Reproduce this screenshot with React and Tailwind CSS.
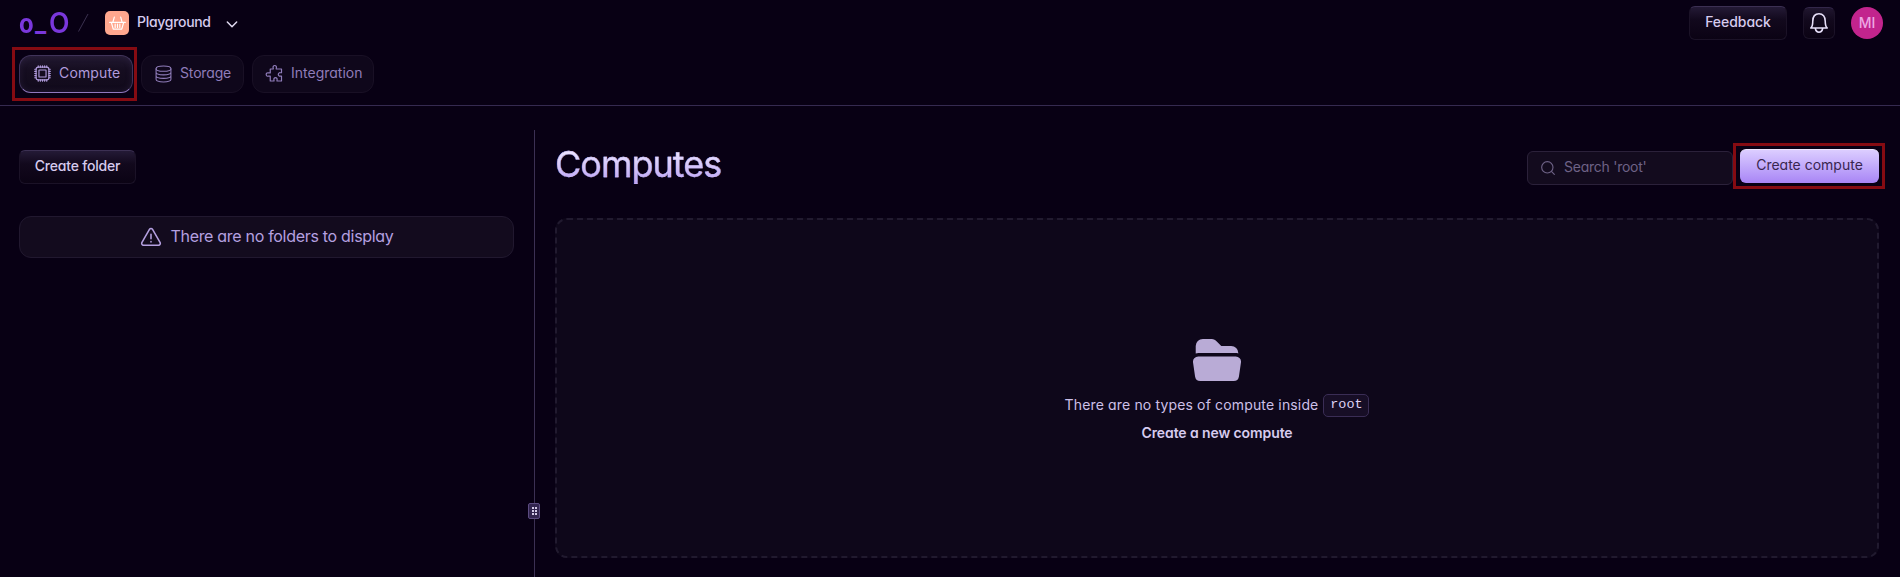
const FONT = "font-['Inter','Liberation_Sans',sans-serif] [font-feature-settings:'cv11'_1]";

const Line = ({ className = "", width = 1.5, children }) => (
  <svg viewBox="0 0 24 24" fill="none" stroke="currentColor" strokeWidth={width} strokeLinecap="round" strokeLinejoin="round" className={"shrink-0 " + className}>
    {children}
  </svg>
);

const Chip = () => (
  <Line className="h-[17px] w-[17px]" width={1.6}>
    <rect x="3" y="3" width="18" height="18" rx="3" />
    <rect x="7" y="7" width="10" height="10" rx="0.5" />
    <path d="M6 1v2M9 1v2M12 1v2M15 1v2M18 1v2M6 21v2M9 21v2M12 21v2M15 21v2M18 21v2M1 6h2M1 9h2M1 12h2M1 15h2M1 18h2M21 6h2M21 9h2M21 12h2M21 15h2M21 18h2" />
  </Line>
);

const Database = () => (
  <Line className="h-[18px] w-[17px]" width={1.5}>
    <ellipse cx="12" cy="4.500" rx="10.500" ry="3.700" />
    <path d="M1.500 4.500v15c0 2 4.700 3.700 10.500 3.700s10.500-1.700 10.500-3.700v-15M1.500 9.500c0 2 4.700 3.700 10.500 3.700s10.500-1.700 10.500-3.700M1.500 14.500c0 2 4.700 3.700 10.500 3.700s10.500-1.700 10.500-3.700" />
  </Line>
);

const Puzzle = () => (
  <Line className="h-[19px] w-[18px]" width={1.6}>
    <path d="M7 6h4V4.800a2.300 2.300 0 1 1 4 0V6h7v5h-1.500a2.300 2.300 0 1 0 0 4.500H22V22h-6v-1.300a2.200 2.200 0 1 0-4 0V22H7v-6.500H4.700a2.300 2.300 0 1 1 0-4.300H7z" />
  </Line>
);

const Basket = () => (
  <Line className="h-[17px] w-[17px] text-white" width={1.7}>
    <path d="M5.500 10 7.500 3M18.500 10 16.500 3M1 10.500h22M3.500 11l2.500 9h12l2.500-9M8.700 13v4.500M12 13v4.500M15.300 13v4.500" />
  </Line>
);

const Tab = ({ icon, label, className, labelClass }) => (
  <div className={"flex h-[38px] items-center rounded-xl border pb-px text-[14px] " + className}>
    {icon}
    <span className={"ml-2 whitespace-nowrap pb-px leading-none " + labelClass}>{label}</span>
  </div>
);

const DARK_BUTTON =
  "flex h-[34px] items-center justify-center whitespace-nowrap rounded-md border border-[#1b1227] border-t-[#3c3053] bg-linear-to-b from-[#241a36] via-[#12091d] via-40% to-[#0b0314] text-[14px] font-medium text-[#d6cbee]";

export default function App() {
  return (
    <div className={"flex h-[577px] w-[1900px] flex-col overflow-hidden bg-[#080014] " + FONT}>
      <header className="h-[106px] shrink-0 border-b border-[#352a50]">
        <div className="flex h-[46px] items-center pl-[18px] pr-[17px]">
          <span className="flex w-[51px] items-baseline whitespace-nowrap pl-px pt-px text-[26px] font-bold leading-[36px] text-[#7a37dc]">
            <span className="w-[16px] origin-left scale-x-[0.92]">o</span>
            <span className="w-[14px] origin-left scale-x-[0.9] -translate-y-[2px]">_</span>
            <span className="w-[19px] origin-left scale-x-[0.95] text-[28px] font-semibold tracking-[-1px]">O</span>
          </span>
          <svg viewBox="0 0 12 20" className="ml-[8px] h-5 w-3" fill="none" stroke="#3b3150">
            <path d="M1.500 18.500 11 1" />
          </svg>
          <div className="ml-[16px] flex h-6 w-6 items-center justify-center rounded-[5px] bg-[#ffa78e]">
            <Basket />
          </div>
          <span className="ml-[8px] w-[74px] whitespace-nowrap pb-[2px] text-[14px] font-medium leading-none tracking-[-0.3px] text-[#d6cbee]">Playground</span>
          <Line className="ml-[13px] mt-[2px] h-4 w-4 text-[#e2dbf2]" width={2.2}>
            <path d="m5 9 7 7 7-7" />
          </Line>
          <div className="ml-auto flex items-center">
            <div className={DARK_BUTTON + " w-[98px] pb-[3px] tracking-[-0.05px]"}>Feedback</div>
            <div className="ml-4 flex h-8 w-8 items-center justify-center rounded-md border border-[#1b1227] border-t-[#33274a] bg-linear-to-b from-[#20162f] via-[#12091d] via-40% to-[#0b0314]">
              <Line className="h-[22px] w-[22px] text-[#e6def8]" width={1.7}>
                <path d="M3 17.500h18c-1.700-1.500-2.200-3-2.200-7.500 0-5-2.500-8-6.800-8s-6.800 3-6.800 8c0 4.500-.5 6-2.200 7.500zM8 18c.5 2.600 2 4 4 4s3.500-1.400 4-4" />
              </Line>
            </div>
            <div className="ml-4 flex h-8 w-8 items-center justify-center rounded-full bg-[#c2248d] pb-px text-[14px] font-medium text-[#eda8e4]">MI</div>
          </div>
        </div>
        <div className="flex h-[56px] gap-2 pl-[19px] pt-[9px]">
          <div className="relative">
            <Tab
              icon={<Chip />}
              label="Compute"
              labelClass="tracking-[0.15px]"
              className="w-[114px] border-[#40345a] border-b-[#9078be] bg-linear-to-b from-[#221931] via-[#150d20] via-40% to-[#110a1b] pl-[14px] text-[#b09bdc] shadow-[inset_0_0_6px_#3a2e5266]"
            />
            <div className="pointer-events-none absolute -left-[7px] -top-[8px] h-[54px] w-[125px] border-[3px] border-[#850b12]" />
          </div>
          <Tab icon={<Database />} label="Storage" labelClass="-ml-[1px] tracking-[-0.15px]" className="w-[103px] border-[#191025] bg-[#0f071b] pl-[13px] text-[#8f7cb9]" />
          <Tab icon={<Puzzle />} label="Integration" labelClass="tracking-[0px]" className="w-[122px] border-[#191025] bg-[#0f071b] pl-[12px] text-[#8f7cb9]" />
        </div>
      </header>

      <main className="flex min-h-0 flex-1 pt-6">
        <aside className="w-[534px] shrink-0 pl-[19px] pr-5 pt-5">
          <div className={DARK_BUTTON + " w-[117px] pb-[3px] tracking-[-0.2px]"}>Create folder</div>
          <div className="mt-8 flex h-[42px] items-center justify-center rounded-xl border border-[#21182f] bg-[#130b1e] pb-px pl-px text-[#b5a0e0]">
            <Line className="h-[22px] w-[22px]" width={1.7}>
              <path d="M10.300 3.700 2 18.200A2 2 0 0 0 3.700 21h16.600a2 2 0 0 0 1.700-2.800L13.700 3.700a2 2 0 0 0-3.400 0zM12 9v5M12 17v.5" />
            </Line>
            <span className="ml-[8px] whitespace-nowrap pb-px text-[16px] tracking-[-0.3px]">There are no folders to display</span>
          </div>
        </aside>

        <div className="relative w-px shrink-0 bg-[#3b3053]">
          <div className="absolute -left-[6px] top-[373px] grid h-4 w-3 grid-cols-[2px_2px] content-center justify-center gap-[1px] rounded-[2px] border border-[#5b4b80] bg-[#32254f]">
            {Array.from({ length: 6 }, (_, i) => (
              <span key={i} className="h-[2px] w-[2px] bg-[#d4cbe8]" />
            ))}
          </div>
        </div>

        <section className="flex min-w-0 flex-1 flex-col pl-5 pr-[21px]">
          <div className="flex h-[88px] shrink-0">
            <h1 className="mt-[10px] h-[50px] bg-linear-to-b from-[#eee7ff] from-20% to-[#b99df5] to-90% bg-clip-text pr-2 text-[36px] leading-[48px] tracking-[-1px] text-transparent [-webkit-text-stroke:0.3px_#d3c3fa]">Computes</h1>
            <div className="ml-auto mt-[21px] flex h-[34px] w-[206px] items-center rounded-md border border-[#2b213a] bg-[#130b1e] pl-[12px] text-[#6e6286]">
              <Line className="h-[16px] w-[16px]" width={1.7}>
                <circle cx="11" cy="11" r="8.500" />
                <path d="m17.500 17.500 4 4" />
              </Line>
              <span className="ml-[8px] whitespace-nowrap pb-[3px] text-[14px] tracking-[-0.25px]">Search 'root'</span>
            </div>
            <div className="relative ml-[7px] mt-[19px] h-[34px] w-[139px]">
              <div className="flex h-[34px] items-center justify-center whitespace-nowrap rounded-md border-t border-[#f0e9ff] bg-linear-to-b from-[#dccdff] to-[#a985f5] pb-[4px] text-[14px] text-[#39264f]">Create compute</div>
              <div className="pointer-events-none absolute -left-[7px] -top-[6px] h-[46px] w-[152px] border-[3px] border-[#850b12]" />
            </div>
          </div>

          <div className="relative flex h-[340px] shrink-0 flex-col items-center rounded-xl bg-[#0e071a] pt-[119px] text-[14px] text-[#cdc0e8]">
            <svg className="absolute inset-0 h-full w-full" fill="none">
              <rect x="1" y="1" width="1322" height="338" rx="11" stroke="#211a2f" strokeWidth="2" strokeDasharray="6 4" />
            </svg>
            <svg viewBox="1.850 3 20.300 18" preserveAspectRatio="none" className="mt-[2px] h-[42px] w-[48px] fill-[#b9abd6]">
              <path d="M19.906 9c.382 0 .749.057 1.094.162V9a3 3 0 0 0-3-3h-3.879a.75.75 0 0 1-.53-.22L11.470 3.660A2.250 2.250 0 0 0 9.879 3H6a3 3 0 0 0-3 3v3.162A3.756 3.756 0 0 1 4.094 9h15.812zM4.094 10.500a2.250 2.250 0 0 0-2.227 2.568l.857 6A2.250 2.250 0 0 0 4.951 21H19.050a2.250 2.250 0 0 0 2.227-1.932l.857-6a2.250 2.250 0 0 0-2.227-2.568H4.094z" />
            </svg>
            <div className="mt-[13px] flex h-[23px] items-center whitespace-nowrap">
              <span className="pb-[2px] tracking-[0.15px]">There are no types of compute inside</span>
              <span className="ml-[5px] flex h-[23px] w-[46px] items-center justify-center rounded-[5px] border border-[#3a2d55] bg-[#170e26] font-['Liberation_Mono',monospace] text-[13.5px] text-[#ddd2f5]">root</span>
            </div>
            <div className="mt-[5px] whitespace-nowrap text-[14px] font-semibold leading-[22px] tracking-[-0.1px] text-[#d6cbee]">Create a new compute</div>
          </div>
        </section>
      </main>
    </div>
  );
}
